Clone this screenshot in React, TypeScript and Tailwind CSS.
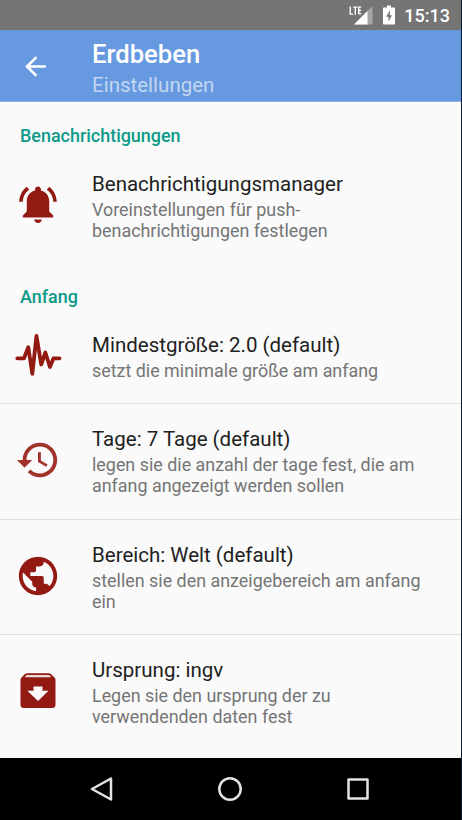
import type { ReactNode } from "react";

const settings: { title: string; summary: string[]; icon: ReactNode }[] = [
  { title: "Mindestgröße: 2.0 (default)", summary: ["setzt die minimale größe am anfang"], icon: <PulseIcon /> },
  { title: "Tage: 7 Tage (default)", summary: ["legen sie die anzahl der tage fest, die am", "anfang angezeigt werden sollen"], icon: <HistoryIcon /> },
  { title: "Bereich: Welt (default)", summary: ["stellen sie den anzeigebereich am anfang", "ein"], icon: <GlobeIcon /> },
  { title: "Ursprung: ingv", summary: ["Legen sie den ursprung der zu", "verwendenden daten fest"], icon: <ArchiveIcon /> },
];

function BellIcon() {
  return (
    <svg viewBox="0 0 46 46" className="size-[46px]" fill="#931a12">
      <path d="M23 4.500c-1.700 0-2.900 1.200-2.900 2.800v1.300c-5.100 1.200-8.300 5.300-8.300 10.600v10.300l-4 4v2h30.400v-2l-4-4V19.200c0-5.300-3.200-9.400-8.300-10.600V7.300c0-1.600-1.200-2.800-2.900-2.800z" />
      <path d="M19.300 37.600h7.400c0 2-1.600 3.400-3.700 3.400s-3.700-1.400-3.700-3.400z" />
      <path d="M11.700 4.800l2.500 2.600c-3.900 2.900-6.200 6.900-6.500 12.300H4.200C4.500 13.500 7.200 8.300 11.700 4.800zM34.300 4.800l-2.500 2.600c3.900 2.900 6.200 6.900 6.500 12.300h3.500C41.500 13.500 38.800 8.300 34.300 4.800z" />
    </svg>
  );
}

function PulseIcon() {
  return (
    <svg viewBox="0 0 46 46" className="size-[46px] overflow-visible" fill="none" stroke="#931a12" strokeWidth="3.800" strokeLinecap="round" strokeLinejoin="round">
      <path d="M2.300 26.300h6.700l4.300-11 4 26.500L21.500 4l4.700 28.500 4.200-12 4.500 14.500 3.600-8.700H44.500" />
    </svg>
  );
}

function HistoryIcon() {
  return (
    <svg viewBox="0 0 24 24" className="size-[46px]" fill="#a2332b">
      <path d="M13 3c-4.970 0-9 4.030-9 9H1l3.890 3.890.07.140L9 12H6c0-3.870 3.130-7 7-7s7 3.130 7 7-3.130 7-7 7c-1.930 0-3.680-.790-4.940-2.060l-1.420 1.420C8.270 19.990 10.510 21 13 21c4.970 0 9-4.030 9-9s-4.030-9-9-9zm-1 5v5l4.280 2.540.720-1.210-3.500-2.080V8H12z" />
    </svg>
  );
}

function GlobeIcon() {
  return (
    <svg viewBox="0 0 24 24" className="size-[46px]" fill="#931a12">
      <path d="M12 2C6.480 2 2 6.480 2 12s4.480 10 10 10 10-4.480 10-10S17.520 2 12 2zm-1 17.930c-3.950-.490-7-3.850-7-7.930 0-.620.080-1.210.210-1.790L9 15v1c0 1.100.900 2 2 2v1.930zm6.900-2.540c-.260-.810-1-1.390-1.900-1.390h-1v-3c0-.550-.450-1-1-1H8v-2h2c.550 0 1-.450 1-1V7h2c1.100 0 2-.900 2-2v-.410c2.930 1.190 5 4.060 5 7.410 0 2.080-.800 3.970-2.100 5.390z" />
    </svg>
  );
}

function ArchiveIcon() {
  return (
    <svg viewBox="0 0 46 46" className="size-[46px]">
      <path d="M9.500 6.500Q11 5.300 12.500 5.300h21q1.500 0 3 1.200l3 3q1 1 1 2.500v24.500a3.500 3.500 0 0 1-3.500 3.500H9a3.500 3.500 0 0 1-3.500-3.500V12q0-1.500 1-2.500z" fill="#931a12" />
      <path d="M11.700 7h22.600l2 2.200H9.700z" fill="#eadedb" />
      <path d="M18.500 18.500h9v4.300h6L23 33 12.300 22.800h6.200z" fill="#fafafa" />
    </svg>
  );
}

function Preference({ title, summary, icon }: { title: string; summary: string[]; icon: ReactNode }) {
  return (
    <div className="flex items-center pl-[15px]">
      <div className="w-[77px] shrink-0 pb-[3px]">{icon}</div>
      <div>
        <div className="text-[20.500px] leading-6 text-[#212121]">{title}</div>
        <div className="pt-[3px] text-[17.900px] leading-[21px] text-[#757575]">
          {summary.map((line) => (
            <div key={line} className="whitespace-nowrap">{line}</div>
          ))}
        </div>
      </div>
    </div>
  );
}

export default function App() {
  return (
    <div className="flex h-[820px] w-[462px] flex-col overflow-hidden border-r border-[#071a33] bg-[#fafafa] font-[Roboto,sans-serif]">
      <div className="flex h-[30px] shrink-0 items-center justify-end bg-[#757575] pr-[11px] text-white">
        <svg viewBox="0 0 24 20" className="mr-[10px] mt-px h-5 w-6">
          <path d="M23.500 0v18.500H5z" fill="#a5a5a5" />
          <path d="M18.500 5v13.500H5z" fill="#fff" />
          <path d="M1.200 .500v7.600h2.800M4.200 1.100h4.300M6.300 1.100v7.600M12.200 1.100H9.700v6.400h2.500M9.700 4.300h2.300" fill="none" stroke="#fff" strokeWidth="1.400" />
        </svg>
        <svg viewBox="0 0 12 20" className="mr-[9px] h-5 w-3">
          <path d="M4 .500h4v2h3.200q.800 0 .800.800v15.400q0 .800-.800.800H.800q-.800 0-.800-.800V3.300q0-.800.800-.800H4z" fill="#fff" />
          <path d="M7 5.500L3 11.800h2.500v5L9 10.300H6.800z" fill="#757575" />
        </svg>
        <span className="pt-px text-[18px] font-medium leading-5">15:13</span>
      </div>
      <header className="flex h-[72px] shrink-0 items-center border-b border-[#8fb0e3] bg-[#6699df] pl-5 pt-px">
        <svg viewBox="0 0 24 24" className="size-[31px]" fill="#fff">
          <path d="M20 11H7.830l5.590-5.590L12 4l-8 8 8 8 1.410-1.410L7.830 13H20v-2z" />
        </svg>
        <div className="pl-[41px] pt-[7px]">
          <h1 className="text-[25.600px] font-medium leading-[30px] text-white">Erdbeben</h1>
          <div className="text-[20.500px] leading-8 text-[#c2d6f2]">Einstellungen</div>
        </div>
      </header>
      <main className="min-h-0 flex-1 overflow-hidden">
        <h2 className="h-[70px] pl-5 pt-6 text-[17.950px] font-medium leading-5 text-[#0d9a89]">Benachrichtigungen</h2>
        <Preference title="Benachrichtigungsmanager" summary={["Voreinstellungen für push-", "benachrichtigungen festlegen"]} icon={<BellIcon />} />
        <h2 className="h-[68px] pl-5 pt-[46px] text-[17.950px] font-medium leading-5 text-[#0d9a89]">Anfang</h2>
        <div className="divide-y divide-[#dedede]">
          {settings.map((s) => (
            <div key={s.title} className="pb-[22.300px] pt-[23px]">
              <Preference {...s} />
            </div>
          ))}
        </div>
      </main>
      <nav className="flex h-[62px] shrink-0 items-center justify-between bg-black pl-[89px] pr-[91px]">
        <svg viewBox="0 0 24 24" className="size-6" fill="none" stroke="#e3e3e3" strokeWidth="2.500" strokeLinejoin="round">
          <path d="M22 1.500v21L3 12z" />
        </svg>
        <svg viewBox="0 0 24 24" className="size-6" fill="none" stroke="#e3e3e3" strokeWidth="2.500">
          <circle cx="12" cy="12" r="10.700" />
        </svg>
        <svg viewBox="0 0 24 24" className="size-6" fill="none" stroke="#e3e3e3" strokeWidth="2.500" strokeLinejoin="round">
          <rect x="2.500" y="2.500" width="19" height="19" />
        </svg>
      </nav>
    </div>
  );
}
